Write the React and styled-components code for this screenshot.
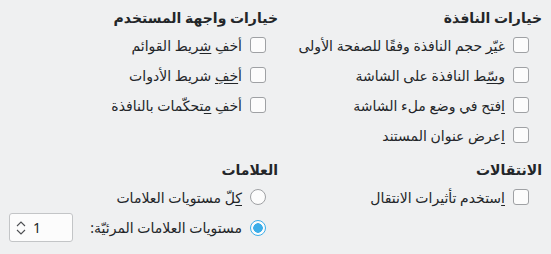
import styled, { createGlobalStyle } from "styled-components";

const GlobalStyle = createGlobalStyle`
  html, body {
    margin: 0;
    padding: 0;
    background: #eff0f1;
  }
  body {
    font-family: "Noto Sans", "DejaVu Sans", sans-serif;
    font-size: 14px;
    color: #232629;
  }
`;

const Page = styled.div`
  direction: rtl;
  width: 551px;
  height: 254px;
  box-sizing: border-box;
  padding: 8px 9px 0 9px;
  display: grid;
  grid-template-columns: 256px 1fr;
  grid-template-rows: auto auto;
  align-content: start;
  column-gap: 8px;
  row-gap: 10px;
`;

const Group = styled.section`
  display: flex;
  flex-direction: column;
`;

const Heading = styled.div`
  font-weight: bold;
  height: 20px;
  line-height: 20px;
  margin-bottom: 2px;
`;

const Row = styled.label`
  display: flex;
  align-items: center;
  gap: 8px;
  height: ${({ $h }) => $h || 30}px;
  padding-right: ${({ $indent }) => $indent ?? 13}px;
  white-space: nowrap;
`;

const Box = styled.span`
  width: 16px;
  height: 16px;
  box-sizing: border-box;
  border: 1px solid #9fa1a4;
  border-radius: 3px;
  background: #fcfcfc;
  flex: none;
`;

const Radio = styled.span`
  width: 16px;
  height: 16px;
  box-sizing: border-box;
  border-radius: 50%;
  border: 1px solid ${({ $on }) => ($on ? "#3daee9" : "#9fa1a4")};
  background: ${({ $on }) =>
    $on ? "radial-gradient(circle, #3daee9 0 4.5px, #fcfcfc 5px)" : "#fcfcfc"};
  flex: none;
`;

const Key = styled.span`
  text-decoration: underline;
  text-underline-offset: 2px;
`;

const Spacer = styled.span`
  flex: 1;
`;

const Spin = styled.div`
  width: 64px;
  height: 29px;
  box-sizing: border-box;
  border: 1px solid #c3c5c7;
  border-radius: 3px;
  background: #fcfcfc;
  display: flex;
  align-items: center;
  gap: 7px;
  padding-left: 6px;
  direction: ltr;
`;

const SpinValue = styled.span`
  font-size: 14px;
`;

function Arrows() {
  return (
    <svg width="10" height="16" viewBox="0 0 10 16" fill="none" stroke="#4d4f52" strokeWidth="1.1">
      <path d="M1 6 L5 2 L9 6" />
      <path d="M1 10 L5 14 L9 10" />
    </svg>
  );
}

export default function App() {
  return (
    <>
      <GlobalStyle />
      <Page>
        <Group>
          <Heading>خيارات النافذة</Heading>
          <Row>
            <Box />
            <span>غ<Key>يّر</Key> حجم النافذة وفقًا للصفحة الأولى</span>
          </Row>
          <Row>
            <Box />
            <span>و<Key>سّ</Key>ط النافذة على الشاشة</span>
          </Row>
          <Row>
            <Box />
            <span><Key>ا</Key>فتح في وضع ملء الشاشة</span>
          </Row>
          <Row>
            <Box />
            <span><Key>ا</Key>عرض عنوان المستند</span>
          </Row>
        </Group>
        <Group>
          <Heading>خيارات واجهة المستخدم</Heading>
          <Row $indent={12}>
            <Box />
            <span>أخفِ <Key>ش</Key>ريط القوائم</span>
          </Row>
          <Row $indent={12}>
            <Box />
            <span>أ<Key>خف</Key>ِ شريط الأدوات</span>
          </Row>
          <Row $indent={12}>
            <Box />
            <span>أخفِ <Key>م</Key>تحكّمات بالنافذة</span>
          </Row>
        </Group>
        <Group>
          <Heading>الانتقالات</Heading>
          <Row>
            <Box />
            <span><Key>ا</Key>ستخدم تأثيرات الانتقال</span>
          </Row>
        </Group>
        <Group>
          <Heading>العلامات</Heading>
          <Row $indent={12}>
            <Radio />
            <span><Key>ك</Key>لّ مستويات العلامات</span>
          </Row>
          <Row $indent={12} $h={31}>
            <Radio $on />
            <span>مستويات العلامات المرئيّة:</span>
            <Spacer />
            <Spin>
              <Arrows />
              <SpinValue>1</SpinValue>
            </Spin>
          </Row>
        </Group>
      </Page>
    </>
  );
}
